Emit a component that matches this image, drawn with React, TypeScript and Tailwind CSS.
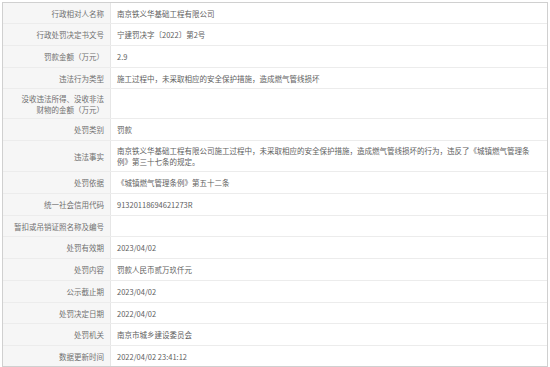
import React from "react";

type Row = { label: React.ReactNode; value: React.ReactNode; h: string };

const rows: Row[] = [
  { label: "行政相对人名称", value: "南京铁义华基础工程有限公司", h: "h-[21px]" },
  { label: "行政处罚决定书文号", value: "宁建罚决字〔2022〕第2号", h: "h-[22px]" },
  { label: "罚款金额（万元）", value: "2.9", h: "h-[22px]" },
  { label: "违法行为类型", value: "施工过程中，未采取相应的安全保护措施，造成燃气管线损坏", h: "h-[21px]" },
  {
    label: (
      <>
        没收违法所得、没收非法
        <br />
        财物的金额（万元）
      </>
    ),
    value: "",
    h: "h-[30px]",
  },
  { label: "处罚类别", value: "罚款", h: "h-[22px]" },
  {
    label: "违法事实",
    value: (
      <>
        南京铁义华基础工程有限公司施工过程中，未采取相应的安全保护措施，造成燃气管线损坏的行为，违反了《城镇燃气管理条
        <br />
        例》第三十七条的规定。
      </>
    ),
    h: "h-[31px]",
  },
  { label: "处罚依据", value: "《城镇燃气管理条例》第五十二条", h: "h-[22px]" },
  { label: "统一社会信用代码", value: "91320118694621273R", h: "h-[22px]" },
  { label: "暂扣或吊销证照名称及编号", value: "", h: "h-[21px]" },
  { label: "处罚有效期", value: "2023/04/02", h: "h-[22px]" },
  { label: "处罚内容", value: "罚款人民币贰万玖仟元", h: "h-[22px]" },
  { label: "公示截止期", value: "2023/04/02", h: "h-[22px]" },
  { label: "处罚决定日期", value: "2022/04/02", h: "h-[21px]" },
  { label: "处罚机关", value: "南京市城乡建设委员会", h: "h-[22px]" },
  { label: "数据更新时间", value: "2022/04/02 23:41:12", h: "h-[20px]" },
];

export default function App() {
  return (
    <div
      className="w-[550px] h-[367px] bg-white pt-[2px] pl-[2px] overflow-hidden"
      style={{ fontFamily: '"Noto Sans CJK SC", "Noto Sans", sans-serif' }}
    >
      <div className="w-[546px] border border-[#d0d0d0] text-[7.5px] leading-[11px]">
        {rows.map((r, i) => (
          <div
            key={i}
            className={`flex ${r.h} ${i < rows.length - 1 ? "border-b border-[#ececec]" : ""}`}
          >
            <div className="w-[108px] shrink-0 bg-[#f6f6f6] border-r border-[#e6e6e6] flex items-center justify-end pr-[6px] text-right text-[#707070]">
              <div>{r.label}</div>
            </div>
            <div className="flex-1 flex items-center pl-[6px] text-[#606060]">
              <div>{r.value}</div>
            </div>
          </div>
        ))}
      </div>
    </div>
  );
}
